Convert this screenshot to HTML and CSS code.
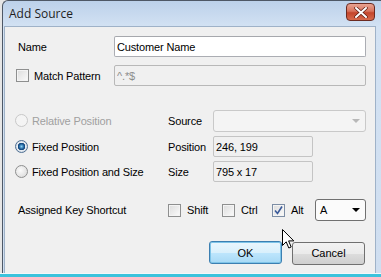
FILE: index.html
```html
<!DOCTYPE html>
<html lang="en">
<head>
    <meta charset="UTF-8">
    <title>Add Source</title>
    <link rel="stylesheet" href="styles.css">
</head>
<body>
    <div class="janela">
        <div class="titulo">
            <span class="titulo-texto">Add Source</span>
            <button class="fechar">
                <svg width="14" height="11" viewBox="0 0 14 11">
                    <path d="M2 1 L12 10 M12 1 L2 10" stroke="#5a1a10" stroke-width="3.4" stroke-linecap="round"/>
                    <path d="M2 1 L12 10 M12 1 L2 10" stroke="#ffffff" stroke-width="2" stroke-linecap="round"/>
                </svg>
            </button>
        </div>
        <div class="cliente">
            <div class="linha linha-nome">
                <span class="rotulo col1">Name</span>
                <input class="campo largo" type="text" value="Customer Name">
            </div>
            <div class="linha linha-padrao">
                <span class="opcao col1"><span class="caixa"></span>Match Pattern</span>
                <input class="campo largo inativo" type="text" value="^.*$" disabled>
            </div>
            <div class="linha linha-rel">
                <span class="opcao col-radio desativado"><span class="radio"></span>Relative Position</span>
                <span class="rotulo col2">Source</span>
                <span class="lista lista-fonte"><span class="seta seta-cinza"></span></span>
            </div>
            <div class="linha linha-fixa">
                <span class="opcao col-radio"><span class="radio marcado"></span>Fixed Position</span>
                <span class="rotulo col2">Position</span>
                <input class="campo curto leitura" type="text" value="246, 199" readonly>
            </div>
            <div class="linha linha-tam">
                <span class="opcao col-radio"><span class="radio"></span>Fixed Position and Size</span>
                <span class="rotulo col2">Size</span>
                <input class="campo curto leitura" type="text" value="795 x 17" readonly>
            </div>
            <div class="linha linha-atalho">
                <span class="rotulo col-atalho">Assigned Key Shortcut</span>
                <span class="opcao tecla tecla-shift"><span class="caixa"></span>Shift</span>
                <span class="opcao tecla tecla-ctrl"><span class="caixa"></span>Ctrl</span>
                <span class="opcao tecla tecla-alt"><span class="caixa marcada">
                    <svg width="9" height="9" viewBox="0 0 9 9"><path d="M1 4.5 L3.5 7.5 L8 0.5" fill="none" stroke="#3a5a9a" stroke-width="1.6"/></svg>
                </span>Alt</span>
                <span class="lista lista-tecla">A<span class="seta"></span></span>
            </div>
            <div class="linha linha-botoes">
                <button class="botao botao-ok">OK</button>
                <button class="botao">Cancel</button>
            </div>
        </div>
        <svg class="cursor" width="13" height="22" viewBox="0 0 13 22">
            <path d="M0.5 0.5 L0.5 16.5 L4.2 12.8 L6.8 19 L9.2 18 L6.6 11.9 L11.8 11.9 Z" fill="#ffffff" stroke="#000000" stroke-width="1"/>
        </svg>
    </div>
</body>
</html>
```

FILE: styles.css
```css
*{
    box-sizing: border-box;
    margin: 0;
    padding: 0;
}
body{
    width: 381px;
    height: 277px;
    overflow: hidden;
    background: linear-gradient(#e6e6e6 273px, #f4f8fa 273px, #f4f8fa 274px, #3cc3dc 274px);
    font-family: "Liberation Sans", Arial, sans-serif;
    font-size: 11px;
    letter-spacing: -0.15px;
    color: #000;
}
.janela{
    position: relative;
    margin-left: 2px;
    height: 273px;
    border-left: 1px solid #4e5866;
    border-top: 1px solid #4e5866;
    border-top-left-radius: 6px;
    background: linear-gradient(#bcd1ea, #d3e2f3 26px, #cfdef0);
    padding-right: 5px;
    display: flex;
    flex-direction: column;
}
.titulo{
    height: 25px;
    display: flex;
    align-items: center;
    justify-content: space-between;
    padding-left: 6px;
}
.titulo-texto{
    font-family: "Open Sans", "Liberation Sans", sans-serif;
    font-size: 12px;
    letter-spacing: 0;
    color: #1e1e1e;
    margin-top: -1px;
}
.fechar{
    width: 29px;
    height: 18px;
    margin-top: -3px;
    margin-right: 1px;
    border: 1px solid #6b2a20;
    border-radius: 4px;
    background: linear-gradient(#e8a493, #d8735c 45%, #c4452b 55%, #d66a4c);
    display: flex;
    align-items: center;
    justify-content: center;
}
.cliente{
    flex: 1;
    margin-left: 1px;
    background-color: #f0f0f0;
    border: 1px solid #9fb2c8;
    border-bottom: none;
    padding: 9px 0 0 11px;
}
.linha{
    display: flex;
    align-items: center;
    height: 21px;
}
.linha-padrao{
    margin-top: 8px;
}
.linha-rel{
    margin-top: 24px;
}
.linha-fixa{
    margin-top: 5px;
}
.linha-tam{
    margin-top: 4px;
}
.linha-atalho{
    margin-top: 17px;
    height: 22px;
}
.linha-botoes{
    margin-top: 20px;
    height: 23px;
    padding-left: 193px;
}
.rotulo{
    padding-left: 2px;
}
.col1{
    width: 98px;
}
.col-radio{
    width: 150px;
}
.col2{
    width: 47px;
}
.col-atalho{
    width: 152px;
}
.opcao{
    display: flex;
    align-items: center;
    gap: 5px;
}
.desativado{
    color: #a0a0a0;
}
.caixa{
    width: 13px;
    height: 13px;
    border: 1px solid #8e8f8f;
    background: linear-gradient(135deg, #dcdcdc, #fbfbfb);
    box-shadow: inset 0 0 0 1px #f4f4f4;
    display: flex;
    align-items: center;
    justify-content: center;
}
.radio{
    width: 13px;
    height: 13px;
    border-radius: 50%;
    border: 1px solid #8e8f8f;
    background: radial-gradient(circle at 40% 40%, #fbfbfb, #d6d6d6);
    margin-left: -1px;
    margin-right: -1px;
}
.desativado .radio{
    border-color: #c8c8c8;
    background: #f4f4f4;
}
.radio.marcado{
    background: radial-gradient(circle, #8ad3f8 0, #1d5f9a 2.5px, #0f3f75 3.5px, #e8eef4 4px, #d0d8e0 6px);
    border-color: #4e6f93;
}
.campo{
    height: 21px;
    border: 1px solid #abadb3;
    border-top-color: #a6a8ad;
    border-radius: 2px;
    padding: 0 2px;
    font-family: "Liberation Sans", Arial, sans-serif;
    font-size: 11px;
    letter-spacing: -0.15px;
    color: #000;
    background-color: #fff;
    outline: none;
}
.largo{
    width: 252px;
}
.curto{
    width: 100px;
}
.inativo{
    background-color: #f0f0f0;
    border-color: #b8b8b8;
    color: #8d8d8d;
}
.leitura{
    background-color: #f0f0f0;
    border-color: #c4c4c4;
}
.lista{
    position: relative;
    height: 22px;
    border: 1px solid #b8b8b8;
    border-radius: 3px;
    background-color: #f2f2f2;
    display: flex;
    align-items: center;
    padding-left: 4px;
}
.lista-fonte{
    width: 153px;
    background-color: #f4f4f4;
    border-color: #c9c9c9;
}
.lista-tecla{
    width: 51px;
    margin-left: 4px;
    border-color: #707070;
    background-color: #fbfbfb;
}
.seta{
    position: absolute;
    right: 5px;
    top: 8px;
    border-left: 4px solid transparent;
    border-right: 4px solid transparent;
    border-top: 4px solid #000;
}
.seta-cinza{
    border-top-color: #b8b8b8;
}
.tecla{
    gap: 6px;
}
.tecla-shift{
    width: 54px;
}
.tecla-ctrl{
    width: 50px;
}
.tecla-alt{
    width: 39px;
}
.marcada{
    border-color: #7d8ea5;
}
.botao{
    width: 73px;
    height: 23px;
    border: 1px solid #707070;
    border-radius: 3px;
    background: linear-gradient(#f2f2f2, #ebebeb 50%, #dddddd 51%, #cfcfcf);
    font-family: "Liberation Sans", Arial, sans-serif;
    font-size: 11px;
    color: #000;
    margin-right: 10px;
    margin-top: 1px;
}
.botao-ok{
    margin-top: 0;
    border-color: #3c7fb1;
    background: linear-gradient(#eaf6fd, #d9f0fc 50%, #bee6fd 51%, #a7d9f5);
    box-shadow: inset 0 0 0 1px #7ec4e8;
}
.cursor{
    position: absolute;
    left: 279px;
    top: 228px;
}
```
